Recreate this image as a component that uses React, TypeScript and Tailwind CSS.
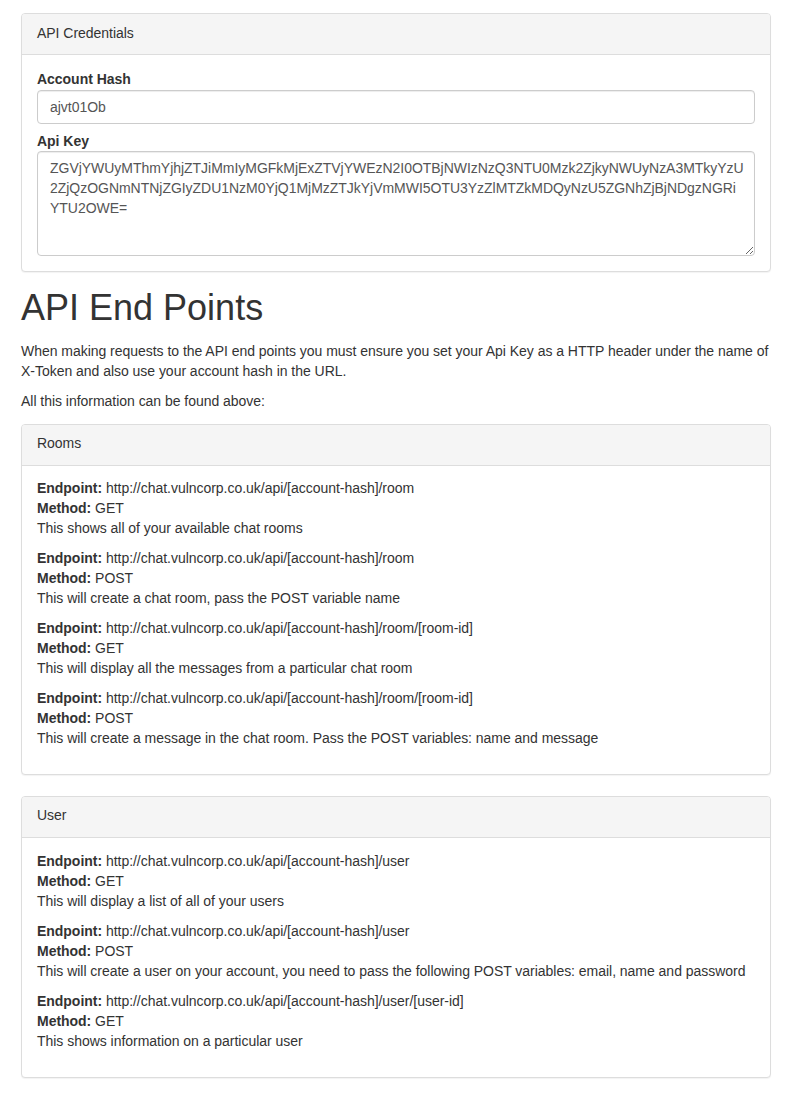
import React from "react";

type Endpoint = {
  url: string;
  method: string;
  description: string;
};

const roomEndpoints: Endpoint[] = [
  {
    url: "http://chat.vulncorp.co.uk/api/[account-hash]/room",
    method: "GET",
    description: "This shows all of your available chat rooms",
  },
  {
    url: "http://chat.vulncorp.co.uk/api/[account-hash]/room",
    method: "POST",
    description: "This will create a chat room, pass the POST variable name",
  },
  {
    url: "http://chat.vulncorp.co.uk/api/[account-hash]/room/[room-id]",
    method: "GET",
    description: "This will display all the messages from a particular chat room",
  },
  {
    url: "http://chat.vulncorp.co.uk/api/[account-hash]/room/[room-id]",
    method: "POST",
    description:
      "This will create a message in the chat room. Pass the POST variables: name and message",
  },
];

const userEndpoints: Endpoint[] = [
  {
    url: "http://chat.vulncorp.co.uk/api/[account-hash]/user",
    method: "GET",
    description: "This will display a list of all of your users",
  },
  {
    url: "http://chat.vulncorp.co.uk/api/[account-hash]/user",
    method: "POST",
    description:
      "This will create a user on your account, you need to pass the following POST variables: email, name and password",
  },
  {
    url: "http://chat.vulncorp.co.uk/api/[account-hash]/user/[user-id]",
    method: "GET",
    description: "This shows information on a particular user",
  },
];

const API_KEY =
  "ZGVjYWUyMThmYjhjZTJiMmIyMGFkMjExZTVjYWEzN2I0OTBjNWIzNzQ3NTU0Mzk2ZjkyNWUyNzA3MTkyYzU2ZjQzOGNmNTNjZGIyZDU1NzM0YjQ1MjMzZTJkYjVmMWI5OTU3YzZlMTZkMDQyNzU5ZGNhZjBjNDgzNGRiYTU2OWE=";

function Panel({
  title,
  children,
  headingClassName = "pt-[8px] pb-[12px]",
  bodyClassName = "px-[15px] pt-[12.5px] pb-[16px]",
}: {
  title: string;
  children: React.ReactNode;
  headingClassName?: string;
  bodyClassName?: string;
}) {
  return (
    <div className="rounded-[4px] border border-[#dddddd] bg-white shadow-[0_1px_1px_rgba(0,0,0,0.05)]">
      <div
        className={`rounded-t-[3px] border-b border-[#dddddd] bg-[#f5f5f5] px-[15px] leading-5 text-[#333333] ${headingClassName}`}
      >
        {title}
      </div>
      <div className={bodyClassName}>{children}</div>
    </div>
  );
}

function EndpointList({ items }: { items: Endpoint[] }) {
  return (
    <>
      {items.map((item, i) => (
        <p key={i} className="mb-[10px] leading-5">
          <strong className="font-bold">Endpoint:</strong> {item.url}
          <br />
          <strong className="font-bold">Method:</strong> {item.method}
          <br />
          {item.description}
        </p>
      ))}
    </>
  );
}

export default function App() {
  return (
    <div className="min-h-[1095px] bg-white font-['Liberation_Sans',Arial,sans-serif] text-[14px] leading-5 tracking-[-0.03px] text-[#333333]">
      <div className="mx-auto w-[750px] pt-[13px] pb-[16px]">
        {/* credentials */}
        <Panel
          title="API Credentials"
          headingClassName="pt-[9px] pb-[11px]"
          bodyClassName="px-[15px] pt-[14px] pb-[15px]"
        >
          <label className="mb-[1px] block font-bold leading-5">Account Hash</label>
          <input
            readOnly
            value="ajvt01Ob"
            className="block h-[34px] w-full rounded-[4px] border border-[#cccccc] px-3 py-[6px] text-[14px] text-[#555555] shadow-[inset_0_1px_1px_rgba(0,0,0,0.075)] outline-none"
          />
          <label className="mt-[7px] block font-bold leading-5">Api Key</label>
          <textarea
            readOnly
            value={API_KEY}
            className="block h-[105px] w-full rounded-[4px] border border-[#cccccc] pt-[6px] pr-[9px] pb-[6px] pl-3 font-['Liberation_Sans',Arial,sans-serif] text-[14px] leading-5 tracking-[-0.03px] text-[#555555] shadow-[inset_0_1px_1px_rgba(0,0,0,0.075)] outline-none"
          />
        </Panel>

        <h1 className="mt-[16px] mb-[13px] text-[36px] leading-[1.1] font-medium tracking-normal">
          API End Points
        </h1>
        <p className="mb-[10px]">
          When making requests to the API end points you must ensure you set your Api Key as a HTTP
          header under the name of X-Token and also use your account hash in the URL.
        </p>
        <p className="mb-[13px]">All this information can be found above:</p>

        <div className="space-y-[21px]">
          <Panel title="Rooms">
            <EndpointList items={roomEndpoints} />
          </Panel>
          <Panel title="User">
            <EndpointList items={userEndpoints} />
          </Panel>
        </div>
      </div>
    </div>
  );
}
